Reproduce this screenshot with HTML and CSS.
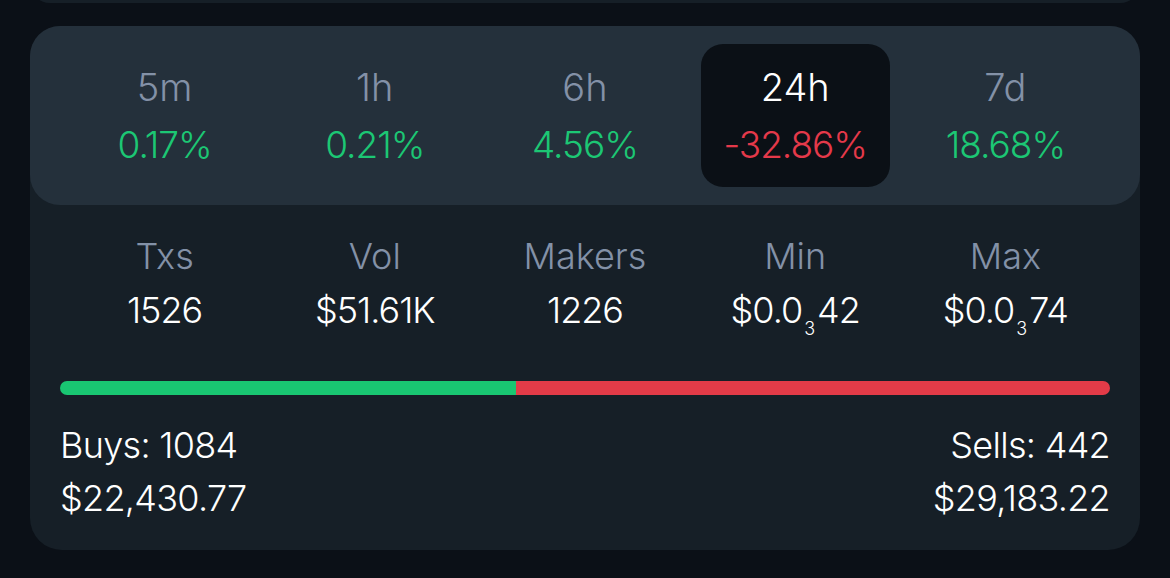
FILE: index.html
```html
<!DOCTYPE html>
<html lang="en">
<head>
    <meta charset="UTF-8">
    <meta name="viewport" content="width=device-width, initial-scale=1.0">
    <title>Pair stats</title>
    <link rel="stylesheet" href="styles.css">
</head>
<body>

    <!-- tail of the card above -->
    <div class="card card-prev"></div>

    <div class="card">
        <!-- Period tabs -->
        <div class="periods">
            <div class="period">
                <span class="period-name">5m</span>
                <span class="change up">0.17%</span>
            </div>
            <div class="period">
                <span class="period-name">1h</span>
                <span class="change up">0.21%</span>
            </div>
            <div class="period">
                <span class="period-name">6h</span>
                <span class="change up">4.56%</span>
            </div>
            <div class="period active">
                <span class="period-name">24h</span>
                <span class="change down">-32.86%</span>
            </div>
            <div class="period">
                <span class="period-name">7d</span>
                <span class="change up">18.68%</span>
            </div>
        </div>

        <!-- Stats for the selected period -->
        <div class="stats">
            <div class="stat">
                <span class="stat-name">Txs</span>
                <span class="stat-value">1526</span>
            </div>
            <div class="stat">
                <span class="stat-name">Vol</span>
                <span class="stat-value">$51.61K</span>
            </div>
            <div class="stat">
                <span class="stat-name">Makers</span>
                <span class="stat-value">1226</span>
            </div>
            <div class="stat">
                <span class="stat-name">Min</span>
                <span class="stat-value">$0.0<sub class="zeros">3</sub>42</span>
            </div>
            <div class="stat">
                <span class="stat-name">Max</span>
                <span class="stat-value">$0.0<sub class="zeros">3</sub>74</span>
            </div>
        </div>

        <!-- Buy / sell ratio -->
        <div class="ratio-bar">
            <div class="ratio-buys" style="width: 43.46%"></div>
            <div class="ratio-sells"></div>
        </div>

        <div class="totals">
            <div class="side">
                <div>Buys: 1084</div>
                <div>$22,430.77</div>
            </div>
            <div class="side side-right">
                <div>Sells: 442</div>
                <div>$29,183.22</div>
            </div>
        </div>
    </div>

</body>
</html>
```

FILE: styles.css
```css
body {
    margin: 0;
    padding: 0 30px;
    background-color: #0b1017;
    font-family: Inter, "Noto Sans", sans-serif;
    font-weight: 300;
    color: #ffffff;
    overflow: hidden;
}
.card {
    background-color: #161f27;
    border-radius: 32px;
    margin-top: 23px;
    padding-bottom: 25px;
}
.card-prev {
    height: 40px;
    margin-top: -37px;
    padding: 0;
}
/* Period tabs */
.periods {
    display: grid;
    grid-template-columns: repeat(5, 1fr);
    gap: 21px;
    padding: 18px 40px;
    background-color: #24303b;
    border-radius: 30px;
}
.period {
    display: flex;
    flex-direction: column;
    align-items: center;
    justify-content: center;
    height: 143px;
    border-radius: 22px;
    font-size: 37px;
    line-height: 57px;
}
.period.active {
    background-color: #0b1016;
}
.period-name {
    color: #8391a7;
    font-size: 38px;
}
.period.active .period-name {
    color: #ffffff;
}
.change {
    letter-spacing: -1px;
}
.change.up {
    color: #1cc774;
}
.change.down {
    color: #e5394a;
}
/* Stats row */
.stats {
    display: grid;
    grid-template-columns: repeat(5, 1fr);
    gap: 21px;
    padding: 0 40px;
    margin-top: 24px;
}
.stat {
    display: flex;
    flex-direction: column;
    align-items: center;
    font-size: 36px;
    line-height: 54px;
}
.stat-name {
    color: #8391a7;
}
.stat-value {
    letter-spacing: -1px;
}
.zeros {
    font-size: 18px;
    line-height: 0;
    vertical-align: -12px;
    margin: 0 2px;
    letter-spacing: 0;
}
/* Buy / sell bar */
.ratio-bar {
    display: flex;
    height: 14px;
    margin: 44px 30px 0;
    border-radius: 7px;
    overflow: hidden;
}
.ratio-buys {
    background-color: #19c672;
}
.ratio-sells {
    flex-grow: 1;
    background-color: #e33b48;
}
.totals {
    display: flex;
    justify-content: space-between;
    padding: 0 30px;
    margin-top: 24px;
    font-size: 36px;
    line-height: 53px;
    letter-spacing: -0.7px;
}
.side-right {
    text-align: right;
}
```
